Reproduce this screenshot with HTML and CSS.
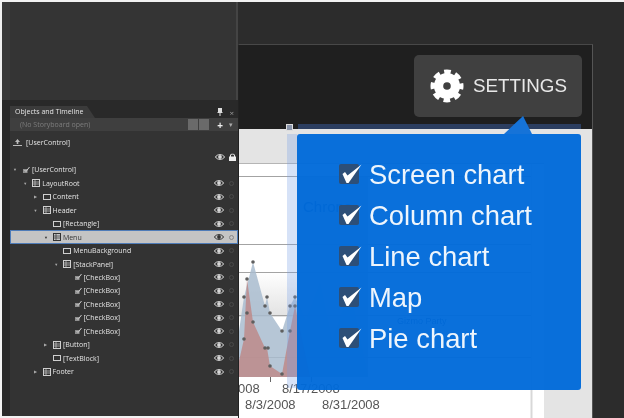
FILE: index.html
```html
<!DOCTYPE html>
<html lang="en">
<head>
  <meta charset="UTF-8">
  <title>Objects and Timeline</title>
  <link rel="stylesheet" href="styles.css">
</head>
<body>
<svg class="defs" width="0" height="0">
  <symbol id="eye" viewBox="0 0 10 8">
    <path d="M.5 4C2 .8 8 .8 9.500 4 8 7.200 2 7.200.5 4Z" fill="none" stroke="currentColor" stroke-width="1"/>
    <circle cx="5" cy="4" r="1.900" fill="currentColor"/>
  </symbol>
  <symbol id="frame" viewBox="0 0 8 8">
    <rect x=".5" y=".5" width="7" height="7" fill="none" stroke="currentColor"/>
    <path d="M1 3H7M3 1V7M1 5H7" stroke="currentColor" stroke-width=".7"/>
  </symbol>
  <symbol id="box" viewBox="0 0 8 8">
    <rect x=".5" y="1.500" width="7" height="5" fill="none" stroke="currentColor" stroke-width="1"/>
  </symbol>
  <symbol id="tick" viewBox="0 0 8 8">
    <rect x="1" y="3" width="4.500" height="4" fill="#8f8f8f"/>
    <path d="M2.500 4 4 5.500 7.500 1" fill="none" stroke="currentColor" stroke-width="1"/>
  </symbol>
  <symbol id="check" viewBox="0 0 24 22">
    <rect width="20" height="20" y="1" rx="2" fill="#2d4f78"/>
    <path d="M3.500 11 6 9l2.500 3.500L22.500 1.500 9.500 20H7.500Z" fill="#fff"/>
  </symbol>
</svg>

<div class="screen">
  <div class="sidebar">
    <div class="sidebar-top"></div>
    <div class="panel">
      <div class="panel-head">
        <span class="tab">Objects and Timeline</span>
        <span class="panel-tools">
          <svg width="6" height="8" viewBox="0 0 6 8"><path d="M1 0H5V4L6 5H3.500V8H2.500V5H0L1 4Z" fill="#ddd"/></svg>
          <span class="close">×</span>
        </span>
      </div>
      <div class="story-bar">
        <span class="story-text">(No Storyboard open)</span>
        <span class="story-btns"><i></i><i></i></span>
        <span class="story-plus">+</span>
        <span class="story-more">▾</span>
      </div>
      <div class="scope">
        <svg width="9" height="7" viewBox="0 0 9 7"><path d="M4.500 0 7 3H5.300V5H3.700V3H2ZM0 6H9V7H0Z" fill="#bbb"/></svg>
        <span>[UserControl]</span>
      </div>
      <div class="scope-tools">
        <svg class="eye"><use href="#eye"/></svg>
        <svg class="lock" viewBox="0 0 7 8"><path d="M1 3.500V2.500C1 0 6 0 6 2.500V3.500H7V8H0V3.500ZM2 3.500H5V2.500C5 1.300 2 1.300 2 2.500Z" fill="#eee"/></svg>
      </div>
      <ul class="tree">
        <li class="row lvl0"><b class="arrow">▼</b><svg class="ico"><use href="#tick"/></svg><span class="name">[UserControl]</span></li>
        <li class="row lvl1"><b class="arrow">▼</b><svg class="ico"><use href="#frame"/></svg><span class="name">LayoutRoot</span><svg class="eye"><use href="#eye"/></svg><i class="dot"></i></li>
        <li class="row lvl2"><b class="arrow">▶</b><svg class="ico"><use href="#box"/></svg><span class="name">Content</span><svg class="eye"><use href="#eye"/></svg><i class="dot"></i></li>
        <li class="row lvl2"><b class="arrow">▼</b><svg class="ico"><use href="#frame"/></svg><span class="name">Header</span><svg class="eye"><use href="#eye"/></svg><i class="dot"></i></li>
        <li class="row lvl3"><b class="arrow"></b><svg class="ico"><use href="#box"/></svg><span class="name">[Rectangle]</span><svg class="eye"><use href="#eye"/></svg><i class="dot"></i></li>
        <li class="row lvl3 selected"><b class="arrow">▼</b><svg class="ico"><use href="#frame"/></svg><span class="name">Menu</span><svg class="eye"><use href="#eye"/></svg><i class="dot"></i></li>
        <li class="row lvl4"><b class="arrow"></b><svg class="ico"><use href="#box"/></svg><span class="name">MenuBackground</span><svg class="eye"><use href="#eye"/></svg><i class="dot"></i></li>
        <li class="row lvl4"><b class="arrow">▼</b><svg class="ico"><use href="#frame"/></svg><span class="name">[StackPanel]</span><svg class="eye"><use href="#eye"/></svg><i class="dot"></i></li>
        <li class="row lvl5"><b class="arrow"></b><svg class="ico"><use href="#tick"/></svg><span class="name">[CheckBox]</span><svg class="eye"><use href="#eye"/></svg><i class="dot"></i></li>
        <li class="row lvl5"><b class="arrow"></b><svg class="ico"><use href="#tick"/></svg><span class="name">[CheckBox]</span><svg class="eye"><use href="#eye"/></svg><i class="dot"></i></li>
        <li class="row lvl5"><b class="arrow"></b><svg class="ico"><use href="#tick"/></svg><span class="name">[CheckBox]</span><svg class="eye"><use href="#eye"/></svg><i class="dot"></i></li>
        <li class="row lvl5"><b class="arrow"></b><svg class="ico"><use href="#tick"/></svg><span class="name">[CheckBox]</span><svg class="eye"><use href="#eye"/></svg><i class="dot"></i></li>
        <li class="row lvl5"><b class="arrow"></b><svg class="ico"><use href="#tick"/></svg><span class="name">[CheckBox]</span><svg class="eye"><use href="#eye"/></svg><i class="dot"></i></li>
        <li class="row lvl3"><b class="arrow">▶</b><svg class="ico"><use href="#frame"/></svg><span class="name">[Button]</span><svg class="eye"><use href="#eye"/></svg><i class="dot"></i></li>
        <li class="row lvl3"><b class="arrow"></b><svg class="ico"><use href="#box"/></svg><span class="name">[TextBlock]</span><svg class="eye"><use href="#eye"/></svg><i class="dot"></i></li>
        <li class="row lvl2"><b class="arrow">▶</b><svg class="ico"><use href="#frame"/></svg><span class="name">Footer</span><svg class="eye"><use href="#eye"/></svg><i class="dot"></i></li>
      </ul>
    </div>
  </div>

  <div class="stage">
    <div class="artboard">
      <div class="artboard-head">
        <div class="settings">
          <svg class="gear" width="36" height="36" viewBox="0 0 36 36">
            <circle cx="18" cy="18" r="13" fill="#fff"/>
            <circle cx="18" cy="18" r="14" fill="none" stroke="#fff" stroke-width="5" stroke-dasharray="6.500 4.500" stroke-dashoffset="3.250"/>
            <circle cx="18" cy="18" r="3.800" fill="#404040"/>
          </svg>
          <span>SETTINGS</span>
        </div>
      </div>
      <div class="artboard-body">
        <div class="card">
          <svg class="chart" width="305" height="255" viewBox="239 163 305 255">
            <defs>
              <linearGradient id="plotbg" x1="0" y1="0" x2="0" y2="1">
                <stop offset="0" stop-color="#fff"/>
                <stop offset="1" stop-color="#e2e2e2"/>
              </linearGradient>
            </defs>
            <rect x="239" y="271" width="129" height="45" fill="url(#plotbg)"/>
            <rect x="297" y="176" width="71" height="200" fill="#bdbdbd"/>
            <path d="M531.500 163V418" stroke="#d8d8d8" stroke-width="2"/>
            <g stroke="#a3a3a3" stroke-width="1">
              <path d="M239 175.500H531M239 243.500H531M239 271.500H531M239 314.500H531M239 356.500H531"/>
            </g>
            <path d="M239 376V330L244 296 253 261 265 305 267 296 270 312 282 330 290 305 295 296 306 320 320 282 332 340 350 290 368 376Z" fill="#a9bccf" fill-opacity=".85"/>
            <path d="M239 376V360L244 338 247 278 253 321 265 347 267 347 270 365 282 373 290 330 295 305 310 376Z" fill="#bd8a8a" fill-opacity=".85"/>
            <g fill="#5f5f5f">
              <circle cx="244" cy="296" r="1.800"/><circle cx="253" cy="261" r="1.800"/><circle cx="265" cy="305" r="1.800"/>
              <circle cx="267" cy="296" r="1.800"/><circle cx="270" cy="312" r="1.800"/><circle cx="282" cy="330" r="1.800"/>
              <circle cx="290" cy="305" r="1.800"/><circle cx="295" cy="296" r="1.800"/><circle cx="244" cy="338" r="1.800"/>
              <circle cx="247" cy="278" r="1.800"/><circle cx="247" cy="312" r="1.800"/><circle cx="253" cy="321" r="1.800"/>
              <circle cx="265" cy="347" r="1.800"/><circle cx="268" cy="347" r="1.800"/><circle cx="270" cy="365" r="1.800"/>
              <circle cx="282" cy="373" r="1.800"/><circle cx="290" cy="330" r="1.800"/><circle cx="295" cy="305" r="1.800"/>
            </g>
            <path d="M270.500 376V381M311.500 376V381" stroke="#666"/>
            <g class="axis">
              <text x="238" y="392">008</text>
              <text x="282" y="392">8/17/2008</text>
              <text x="245" y="408">8/3/2008</text>
              <text x="322" y="408">8/31/2008</text>
            </g>
            <text class="ghost" x="303" y="211">Chrono</text>
            <text class="ghost-small" x="397" y="323">Gizmo Party</text>
          </svg>
        </div>
        <div class="guide"></div>
        <div class="head-strip"></div>
        <div class="handle"></div>
        <div class="pointer"></div>
        <div class="popup">
          <ul class="menu">
            <li><svg class="check"><use href="#check"/></svg>Screen chart</li>
            <li><svg class="check"><use href="#check"/></svg>Column chart</li>
            <li><svg class="check"><use href="#check"/></svg>Line chart</li>
            <li><svg class="check"><use href="#check"/></svg>Map</li>
            <li><svg class="check"><use href="#check"/></svg>Pie chart</li>
          </ul>
        </div>
      </div>
    </div>
  </div>
</div>
</body>
</html>
```

FILE: styles.css
```css
* {
  box-sizing: border-box;
}

html, body {
  margin: 0;
  padding: 0;
  background: #f2f2f2;
}

.defs {
  position: absolute;
}

.screen {
  display: flex;
  width: 624px;
  height: 418px;
  padding: 2px 0 0 2px;
  overflow: hidden;
  background: #f2f2f2;
  font-family: "Liberation Sans", Arial, sans-serif;
  filter: blur(.35px);
}

/* left side: blend panel */
.sidebar {
  display: flex;
  flex-direction: column;
  width: 236px;
  height: 414px;
  padding-left: 8px;
  background: #2a2a2a;
}

.sidebar-top {
  height: 98px;
  margin-left: -8px;
  background: #343434;
  border-left: 8px solid #3a3a3a;
  border-right: 2px solid #444;
}

.panel {
  flex: 1;
  background: #333;
  color: #e4e4e4;
  font-family: "Open Sans", sans-serif;
  font-size: 7px;
}

.panel-head {
  display: flex;
  justify-content: space-between;
  align-items: flex-end;
  height: 18px;
  background: #292929;
}

.tab {
  width: 85px;
  height: 12px;
  padding: 1px 0 0 5px;
  background: #3b3b3b;
  clip-path: polygon(0 0, 77px 0, 100% 100%, 0 100%);
}

.panel-tools {
  display: flex;
  align-items: center;
  gap: 6px;
  height: 12px;
  padding-right: 4px;
}

.close {
  font-size: 8px;
  color: #999;
}

.story-bar {
  display: flex;
  align-items: center;
  height: 13px;
  padding-left: 10px;
  background: #3f3f3f;
  color: #7d7d7d;
}

.story-text {
  flex: 1;
}

.story-btns {
  display: flex;
  gap: 1px;
}

.story-btns i {
  width: 10px;
  height: 11px;
  background: #6a6a6a;
}

.story-plus {
  margin-left: 8px;
  color: #eee;
  font-size: 10px;
  font-weight: bold;
}

.story-more {
  width: 15px;
  text-align: center;
  color: #aaa;
}

.scope {
  display: flex;
  align-items: center;
  gap: 4px;
  height: 19px;
  padding: 4px 0 0 3px;
}

.scope-tools {
  display: flex;
  align-items: center;
  justify-content: flex-end;
  gap: 4px;
  height: 13px;
  padding-right: 2px;
}

.tree {
  margin: 0;
  padding: 0;
  list-style: none;
}

.row {
  display: flex;
  align-items: center;
  height: 13.470px;
  padding-right: 4px;
}

.lvl0 { padding-left: 3px; }
.lvl1 { padding-left: 13.300px; }
.lvl2 { padding-left: 23.600px; }
.lvl3 { padding-left: 33.900px; }
.lvl4 { padding-left: 44.200px; }
.lvl5 { padding-left: 54.500px; }

.arrow {
  width: 9px;
  color: #aaa;
  font-size: 4px;
  font-weight: normal;
}

.ico {
  width: 8px;
  height: 8px;
  margin-right: 2px;
  color: #cfcfcf;
}

.name {
  flex: 1;
}

.eye {
  width: 10px;
  height: 8px;
  color: #d8d8d8;
}

.lock {
  width: 7px;
  height: 8px;
}

.dot {
  width: 5px;
  height: 5px;
  margin-left: 5px;
  border: 1px solid #4a4a4a;
  border-radius: 50%;
}

.selected {
  background: #c4c4c4;
  box-shadow: inset 0 0 0 1px #4f7cb8;
  color: #333;
}

.selected .arrow,
.selected .ico,
.selected .eye {
  color: #333;
}

.selected .dot {
  border-color: #888;
}

/* right side: the artboard */
.stage {
  flex: 1;
  padding: 42px 31px 0 0;
  background: #2c2c2c;
}

.artboard {
  display: flex;
  flex-direction: column;
  height: 374px;
  border-top: 1px solid #484848;
  border-right: 1px solid #555;
  border-left: 1px solid #222;
}

.artboard-head {
  display: flex;
  justify-content: flex-end;
  height: 84px;
  padding: 10px 10px 0 0;
  background: #1f1f1f;
}

.settings {
  display: flex;
  align-items: center;
  gap: 8px;
  width: 168px;
  height: 62px;
  padding-left: 15px;
  border-radius: 5px;
  background: #404040;
  color: #e8e8e8;
  font-size: 18.800px;
}

.artboard-body {
  position: relative;
  flex: 1;
  padding-top: 34px;
  background: #e4e4e4;
}

.card {
  width: 305px;
  height: 255px;
  background: #fff;
  border-top: 1px solid #b5b5b5;
}

.chart {
  display: block;
}

.axis text {
  fill: #555;
  font-size: 13px;
}

.ghost {
  fill: #123e78;
  font-size: 15px;
}

.ghost-small {
  fill: #123e78;
  font-size: 9px;
}

.guide {
  position: absolute;
  left: 48px;
  top: 5px;
  width: 10px;
  height: 254px;
  background: rgba(120, 160, 230, .3);
}

.head-strip {
  position: absolute;
  left: 59px;
  top: -5px;
  width: 283px;
  height: 5px;
  background: #2c3e60;
}

.handle {
  position: absolute;
  left: 47px;
  top: -5px;
  width: 7px;
  height: 7px;
  background: #8a95ab;
  border: 1px solid #ddd;
}

.pointer {
  position: absolute;
  left: 265px;
  top: -13px;
  width: 28px;
  height: 18px;
  background: #1673d8;
  clip-path: polygon(68% 0, 100% 100%, 0 100%);
}

.popup {
  position: absolute;
  left: 58px;
  top: 5px;
  width: 284px;
  height: 256px;
  padding: 20px 0 0 42px;
  border-radius: 3px;
  background: rgba(0, 106, 218, .96);
}

.menu {
  margin: 0;
  padding: 0;
  list-style: none;
}

.menu li {
  display: flex;
  align-items: center;
  height: 41px;
  line-height: 27px;
  color: #eef5fc;
  font-size: 27.400px;
}

.check {
  width: 24px;
  height: 22px;
  margin: -2px 6px 0 0;
}
```
